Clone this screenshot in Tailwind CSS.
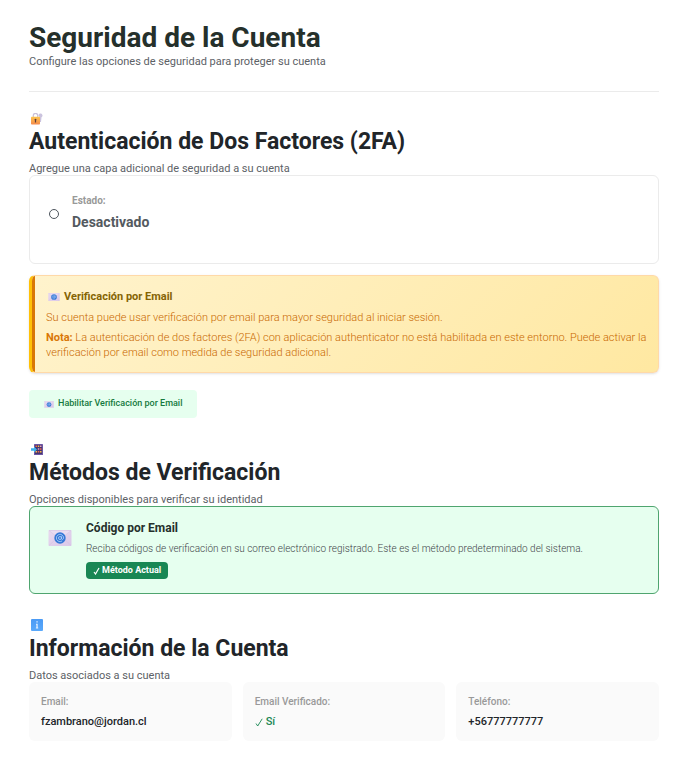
<!DOCTYPE html>
<html lang="es">
<head>
<meta charset="utf-8">
<meta name="viewport" content="width=device-width, initial-scale=1">
<title>Seguridad de la Cuenta</title>
<script src="https://cdn.jsdelivr.net/npm/@tailwindcss/browser@4"></script>
</head>
<body class="bg-white font-[Roboto,sans-serif] text-[#212529]">
<svg class="absolute h-0 w-0" aria-hidden="true">
  <defs>
    <linearGradient id="env" x1="0" y1="0" x2="1" y2="1"><stop offset="0" stop-color="#e9d9ef"/><stop offset="1" stop-color="#dac8e8"/></linearGradient>
    <linearGradient id="lock" x1="0" y1="0" x2="0" y2="1"><stop offset="0" stop-color="#fdc44d"/><stop offset="1" stop-color="#f58a4b"/></linearGradient>
    <linearGradient id="info" x1="0" y1="0" x2="0" y2="1"><stop offset="0" stop-color="#4a9af5"/><stop offset="1" stop-color="#5aa9fb"/></linearGradient>
    <symbol id="mail" viewBox="0 0 24 16">
      <rect x="0.5" y="0" width="23" height="16" rx="0.8" fill="url(#env)"/>
      <path d="M1 15.500 9 8h6l8 7.500" fill="none" stroke="#d0bee0" stroke-width="0.5"/>
      <path d="M1 0.500 12 9.500 23 0.500z" fill="#eadcf1" stroke="#d5c4e2" stroke-width="0.5"/>
      <circle cx="12" cy="8" r="5.7" fill="#3478d6"/>
      <circle cx="12" cy="8" r="1.500" fill="none" stroke="#b9d5fb" stroke-width="0.8"/>
      <path d="M13.600 6.300v2.200c0 1.500 2 1.200 2-.6a3.600 3.600 0 1 0-1.500 3" fill="none" stroke="#b9d5fb" stroke-width="0.8"/>
    </symbol>
  </defs>
</svg>
<main class="px-[29px] pt-[21px] pb-5">
  <header class="border-b border-[#ebebeb] pb-[22px]">
    <h1 class="text-[28px] leading-[34px] font-bold text-[#25302b]">Seguridad de la Cuenta</h1>
    <p class="text-[11px] leading-[14px] text-[#5c6166]">Configure las opciones de seguridad para proteger su cuenta</p>
  </header>

  <section class="mt-[21px]">
    <svg class="ml-0.5 block h-3 w-3" viewBox="0 0 12 12" aria-hidden="true">
      <path d="M7.500 2.800a2 2 0 1 1 3 1.400L10 9H8.500V4z" fill="#cbc3de"/>
      <path d="M2.300 5V2.500a2.200 2.200 0 0 1 4.400 0V5" fill="none" stroke="#c9c0d8" stroke-width="1.200"/>
      <rect x="0" y="3.800" width="9" height="7.700" rx="0.8" fill="url(#lock)"/>
      <path d="M4.500 5.700a1 1 0 0 1 .6 1.800V9.500H3.900V7.500A1 1 0 0 1 4.500 5.700z" fill="#5a3b3a"/>
    </svg>
    <h2 class="text-[23px] leading-[34px] font-bold">Autenticación de Dos Factores (2FA)</h2>
    <p class="mt-[3px] text-[11px] leading-[13px] text-[#5c6166]">Agregue una capa adicional de seguridad a su cuenta</p>

    <div class="flex items-start gap-3 rounded-md border border-[#ebebeb] px-[18px] pt-[17px] pb-[31px]">
      <svg class="mt-[15px] h-3 w-3" viewBox="0 0 12 12" aria-hidden="true"><circle cx="6" cy="6" r="4.500" fill="none" stroke="#4d545c"/></svg>
      <div>
        <p class="text-[10px] leading-4 font-bold text-[#999]">Estado:</p>
        <p class="mt-[3px] text-[14px] leading-5 font-bold text-[#545a5f]">Desactivado</p>
      </div>
    </div>

    <div class="relative mt-[11px] overflow-hidden rounded-md border border-l-3 border-[#ffd9a8] border-l-[#ffc107] bg-linear-135 from-[#fff3cd] to-[#ffe8a1] pt-[13px] pr-2 pb-3 pl-3.5 text-[11px] text-[#c96800] shadow-sm">
      <span class="absolute inset-y-0 left-0 w-[3px] bg-[#d97706]"></span>
      <h3 class="flex items-center gap-1 pl-0.5 leading-4 font-bold text-[#856404]"><svg class="h-2 w-3" aria-hidden="true"><use href="#mail"/></svg>Verificación por Email</h3>
      <p class="mt-[5px] leading-[15px] font-light">Su cuenta puede usar verificación por email para mayor seguridad al iniciar sesión.</p>
      <p class="mt-[5px] leading-[15px] font-light"><strong class="font-bold text-[#d97706]">Nota:</strong> La autenticación de dos factores (2FA) con aplicación authenticator no está habilitada en este entorno. Puede activar la verificación por email como medida de seguridad adicional.</p>
    </div>

    <button type="button" class="mt-[17px] flex h-7 items-center gap-1 rounded-sm bg-[#e6ffef] px-[15px] text-[9px] font-medium text-[#157a3e]"><svg class="h-[7px] w-[10px]" aria-hidden="true"><use href="#mail"/></svg>Habilitar Verificación por Email</button>
  </section>

  <section class="mt-[26px]">
    <svg class="ml-0.5 block h-3 w-3" viewBox="0 0 12 12" aria-hidden="true">
      <rect x="3" y="0" width="9" height="11" rx="0.6" fill="#6a55a5"/>
      <rect x="4" y="1" width="7" height="9" fill="#44366f"/>
      <path d="M4.500 1.500H6V3H4.500zM9 4.200h1.500v1.500H9zM6.800 7h1.500v1.500H6.800z" fill="#f26a4f"/>
      <path d="M6.800 1.500h1.500V3H6.800zM4.500 7H6v1.500H4.500zM9 7h1.500v1.500H9z" fill="#f9b74b"/>
      <path d="M9 1.500h1.500V3H9zM6.800 4.200h1.500v1.500H6.800z" fill="#e6a0c0"/>
      <path d="M0 4.300h3V2.500l3 3-3 3V6.700H0z" fill="#3fb1ee"/>
    </svg>
    <h2 class="text-[23px] leading-[34px] font-bold">Métodos de Verificación</h2>
    <p class="mt-[3px] text-[11px] leading-[13px] text-[#5c6166]">Opciones disponibles para verificar su identidad</p>

    <div class="flex items-start gap-3.5 rounded-md border border-[#4fa56f] bg-[#e6ffef] px-[18px] pt-[13px] pb-3.5">
      <svg class="mt-2.5 h-4 w-6 shrink-0" aria-hidden="true"><use href="#mail"/></svg>
      <div>
        <h3 class="text-[12px] leading-4 font-bold text-[#25302b]">Código por Email</h3>
        <p class="mt-1.5 text-[10px] leading-[14px] font-light text-[#3f454a]">Reciba códigos de verificación en su correo electrónico registrado. Este es el método predeterminado del sistema.</p>
        <span class="mt-1.5 flex h-[17px] w-fit items-center gap-0.5 rounded-sm bg-[#198754] px-[7px] text-[9px] font-bold text-white"><svg class="h-2 w-[7px]" viewBox="0 0 7 8" aria-hidden="true"><path d="M1 5l1.500 2L6 1" fill="none" stroke="currentColor" stroke-width="1.200"/></svg>Método Actual</span>
      </div>
    </div>
  </section>

  <section class="mt-[25px]">
    <svg class="ml-0.5 block h-3 w-3" viewBox="0 0 12 12" aria-hidden="true">
      <rect width="12" height="12" rx="1" fill="url(#info)"/>
      <path d="M5.400 2.200h1.300v1.300H5.400zM5 4.800h1.700v4H5.400V5.800H5zM4.900 8.600h2.300v1H4.900z" fill="#e4f0ff"/>
    </svg>
    <h2 class="mt-px text-[23px] leading-[34px] font-bold">Información de la Cuenta</h2>
    <p class="mt-[3px] text-[11px] leading-[13px] text-[#5c6166]">Datos asociados a su cuenta</p>

    <dl class="grid grid-cols-3 gap-[11px] text-[11px] font-medium">
      <div class="rounded-md bg-[#fafafa] px-3 pt-[13px] pb-[11px]">
        <dt class="text-[10px] leading-[14px] text-[#999]">Email:</dt>
        <dd class="mt-[5px] leading-4">fzambrano@jordan.cl</dd>
      </div>
      <div class="rounded-md bg-[#fafafa] px-3 pt-[13px] pb-[11px]">
        <dt class="text-[10px] leading-[14px] text-[#999]">Email Verificado:</dt>
        <dd class="mt-[5px] flex items-center gap-[3px] leading-4 text-[#198754]"><svg class="h-[9px] w-2" viewBox="0 0 8 9" aria-hidden="true"><path d="M1 5.500l1.700 2.500L7.200 0.800" fill="none" stroke="currentColor" stroke-width="0.900"/></svg>Sí</dd>
      </div>
      <div class="rounded-md bg-[#fafafa] px-3 pt-[13px] pb-[11px]">
        <dt class="text-[10px] leading-[14px] text-[#999]">Teléfono:</dt>
        <dd class="mt-[5px] leading-4">+56777777777</dd>
      </div>
    </dl>
  </section>
</main>
</body>
</html>
